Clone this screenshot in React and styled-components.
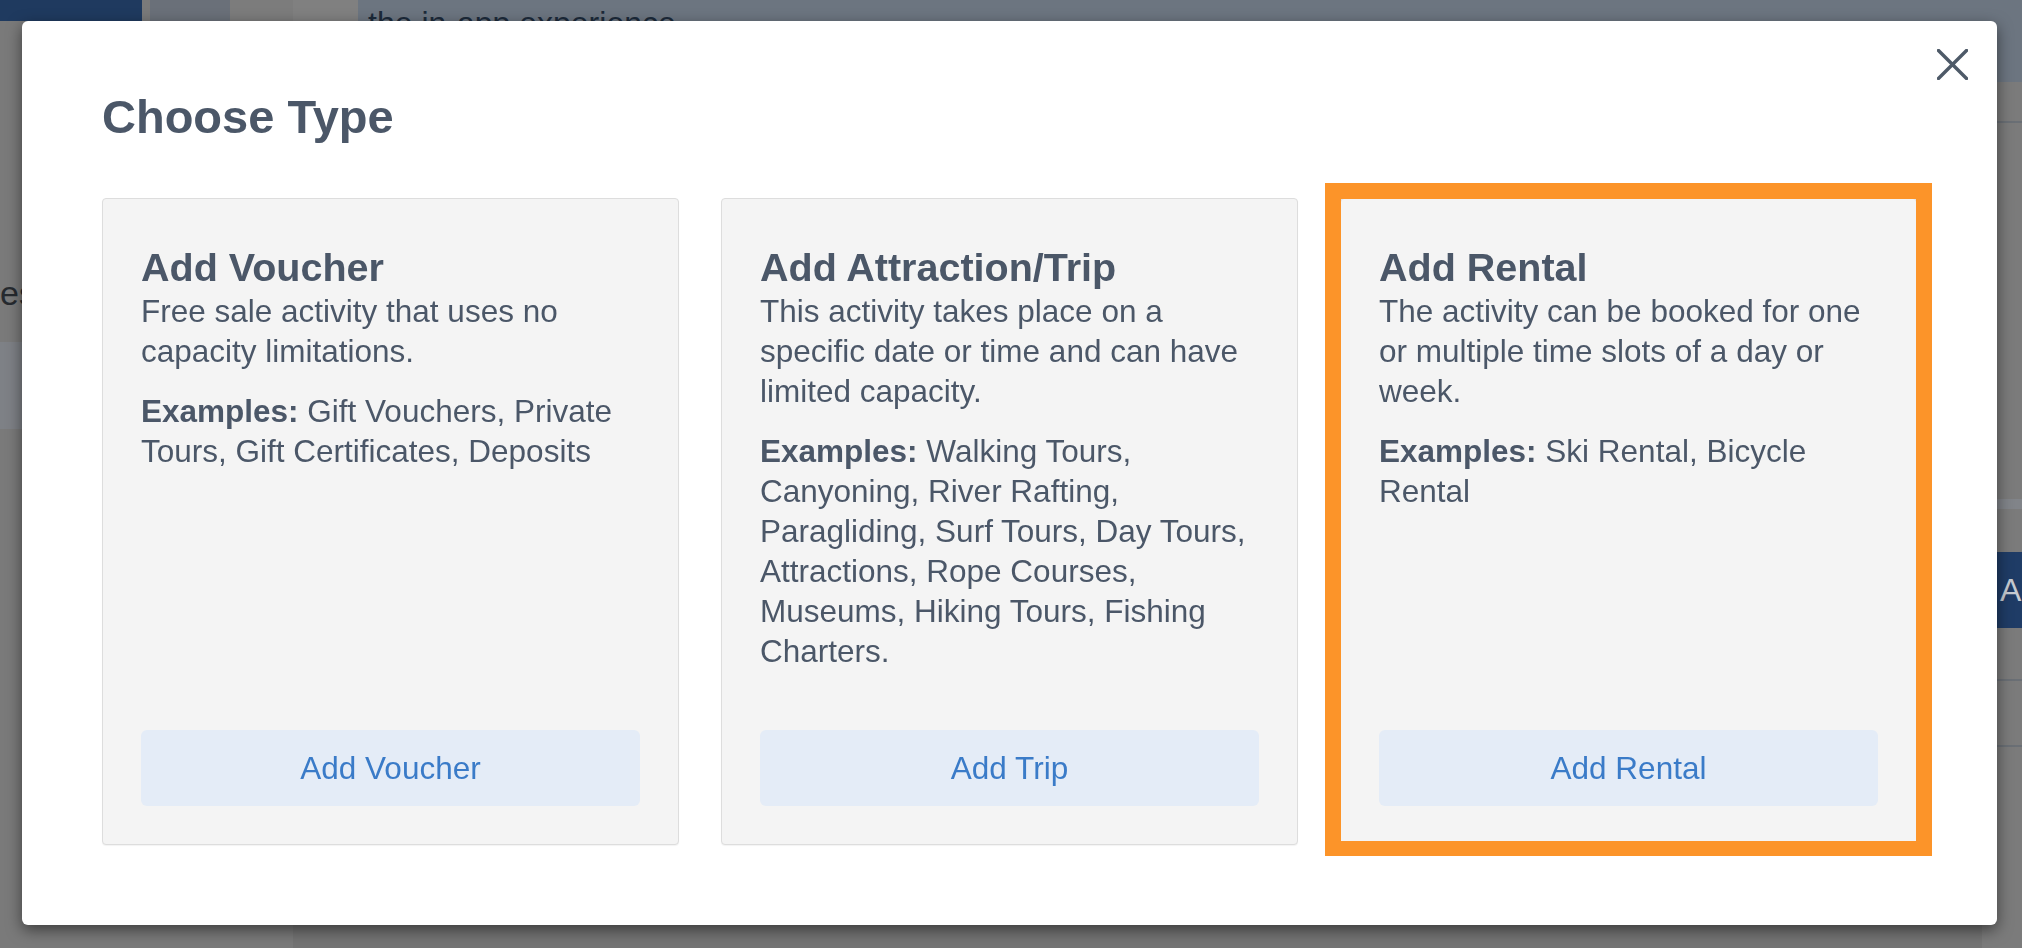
import React from 'react';
import styled, { createGlobalStyle } from 'styled-components';

const GlobalStyle = createGlobalStyle`
  html, body {
    margin: 0;
    padding: 0;
    height: 100%;
    overflow: hidden;
  }
  body {
    font-family: "Liberation Sans", Arial, Helvetica, sans-serif;
  }
  * {
    box-sizing: border-box;
  }
`;

const types = [
  {
    title: 'Add Voucher',
    text: 'Free sale activity that uses no capacity limitations.',
    examples: 'Gift Vouchers, Private Tours, Gift Certificates, Deposits',
    action: 'Add Voucher',
  },
  {
    title: 'Add Attraction/Trip',
    text: 'This activity takes place on a specific date or time and can have limited capacity.',
    examples:
      'Walking Tours, Canyoning, River Rafting, Paragliding, Surf Tours, Day Tours, Attractions, Rope Courses, Museums, Hiking Tours, Fishing Charters.',
    action: 'Add Trip',
  },
  {
    title: 'Add Rental',
    text: 'The activity can be booked for one or multiple time slots of a day or week.',
    examples: 'Ski Rental, Bicycle Rental',
    action: 'Add Rental',
    highlighted: true,
  },
];

function CloseIcon() {
  return (
    <svg width="31" height="31" viewBox="0 0 31 31" fill="none">
      <path d="M1.5 1.5 L29.5 29.5 M29.5 1.5 L1.5 29.5" stroke="#4e5a68" strokeWidth="3.4" strokeLinecap="square" />
    </svg>
  );
}

function App() {
  return (
    <>
      <GlobalStyle />
      <Page>
        <Header>
          <Brand />
          <HeaderTab $w={8} $shade="#7a7a7a" />
          <HeaderTab $w={80} $shade="#6a7079" />
          <HeaderTab $w={63} $shade="#7c7c7c" />
          <HeaderTab $w={65} $shade="#808080" />
          <HeaderMain>the in-app experience</HeaderMain>
        </Header>
        <Body>
          <Sidebar>
            <SideLabel>es</SideLabel>
            <SideBand />
          </Sidebar>
          <Main>
            <RightRail>
              <RailLine $gap={39} />
              <RailBand />
              <RailButton>Add</RailButton>
              <RailLine $gap={51} />
              <RailLine $gap={64} />
            </RightRail>
          </Main>
        </Body>
      </Page>

      <Overlay>
        <Modal>
          <CloseButton aria-label="Close">
            <CloseIcon />
          </CloseButton>
          <Title>Choose Type</Title>
          <CardGrid>
            {types.map((t) => (
              <Card key={t.title} $highlighted={t.highlighted}>
                <CardTitle>{t.title}</CardTitle>
                <CardText>{t.text}</CardText>
                <CardText>
                  <strong>Examples:</strong> {t.examples}
                </CardText>
                <AddButton>{t.action}</AddButton>
              </Card>
            ))}
          </CardGrid>
        </Modal>
      </Overlay>
    </>
  );
}

/* page behind the dialog, already dimmed */

const Page = styled.div`
  display: flex;
  flex-direction: column;
  height: 100vh;
  background: #797979;
`;

const Header = styled.div`
  display: flex;
  align-items: flex-start;
  height: 82px;
  background: #7a7a7a;
`;

const Brand = styled.div`
  width: 142px;
  height: 21px;
  background: #1f3a5f;
`;

const HeaderTab = styled.div`
  width: ${(p) => p.$w}px;
  height: 21px;
  background: ${(p) => p.$shade};
`;

const HeaderMain = styled.div`
  flex: 1;
  height: 82px;
  background: #6c7580;
  padding: 5px 0 0 10px;
  font-size: 32px;
  line-height: 36px;
  color: #1c2a3a;
`;

const Body = styled.div`
  flex: 1;
  display: flex;
`;

const Sidebar = styled.div`
  width: 293px;
  display: flex;
  flex-direction: column;
  padding-top: 191px;
  background: #7a7a7a;
`;

const SideLabel = styled.div`
  font-size: 34px;
  line-height: 40px;
  color: #262a2f;
`;

const SideBand = styled.div`
  margin-top: 29px;
  height: 87px;
  background: #7e8186;
`;

const Main = styled.div`
  flex: 1;
  display: flex;
  justify-content: flex-end;
  background: #747474;
`;

const RightRail = styled.div`
  width: 40px;
  display: flex;
  flex-direction: column;
  background: #7b7b7b;
`;

const RailLine = styled.div`
  margin-top: ${(p) => p.$gap}px;
  height: 2px;
  background: #6a6f75;
`;

const RailBand = styled.div`
  margin-top: 376px;
  height: 10px;
  background: #818489;
`;

const RailButton = styled.div`
  margin-top: 43px;
  height: 76px;
  padding-left: 18px;
  display: flex;
  align-items: center;
  background: #1f3c66;
  color: #c5cad1;
  font-size: 32px;
  white-space: nowrap;
  overflow: hidden;
`;

/* dialog */

const Overlay = styled.div`
  position: fixed;
  inset: 0;
  padding: 21px 25px 0 22px;
`;

const Modal = styled.div`
  position: relative;
  width: 1975px;
  height: 904px;
  padding: 68px 80px 80px;
  background: #fff;
  border-radius: 6px;
  box-shadow: 0 5px 15px rgba(0, 0, 0, 0.5);
  color: #4b5768;
`;

const CloseButton = styled.button`
  position: absolute;
  top: 28px;
  right: 29px;
  display: flex;
  padding: 0;
  border: none;
  background: none;
  cursor: pointer;
`;

const Title = styled.h2`
  margin: 0 0 53px;
  font-size: 47px;
  line-height: 56px;
  font-weight: 700;
`;

const CardGrid = styled.div`
  display: grid;
  grid-template-columns: repeat(3, 1fr);
  gap: 42px;
`;

const Card = styled.div`
  position: relative;
  display: flex;
  flex-direction: column;
  height: 647px;
  padding: 46px 38px 38px;
  background: #f4f4f4;
  border: 1px solid #dddddd;
  border-radius: 4px;
  box-shadow: 0 1px 1px rgba(0, 0, 0, 0.05);

  ${(p) =>
    p.$highlighted &&
    `
    &::after {
      content: '';
      position: absolute;
      top: -16px;
      left: -16px;
      right: -16px;
      bottom: -12px;
      border: 16px solid #fc9429;
      border-bottom-width: 15px;
      pointer-events: none;
    }
  `}
`;

const CardTitle = styled.h3`
  margin: 0 0 2px;
  font-size: 39.5px;
  line-height: 44px;
  font-weight: 700;
`;

const CardText = styled.p`
  margin: 0 0 20px;
  font-size: 31.5px;
  line-height: 40px;

  strong {
    font-weight: 700;
  }
`;

const AddButton = styled.button`
  margin-top: auto;
  width: 100%;
  height: 76px;
  border: none;
  border-radius: 6px;
  background: #e4ecf7;
  color: #3a7bc8;
  font-family: inherit;
  font-size: 31.5px;
  cursor: pointer;
`;

export default App;
